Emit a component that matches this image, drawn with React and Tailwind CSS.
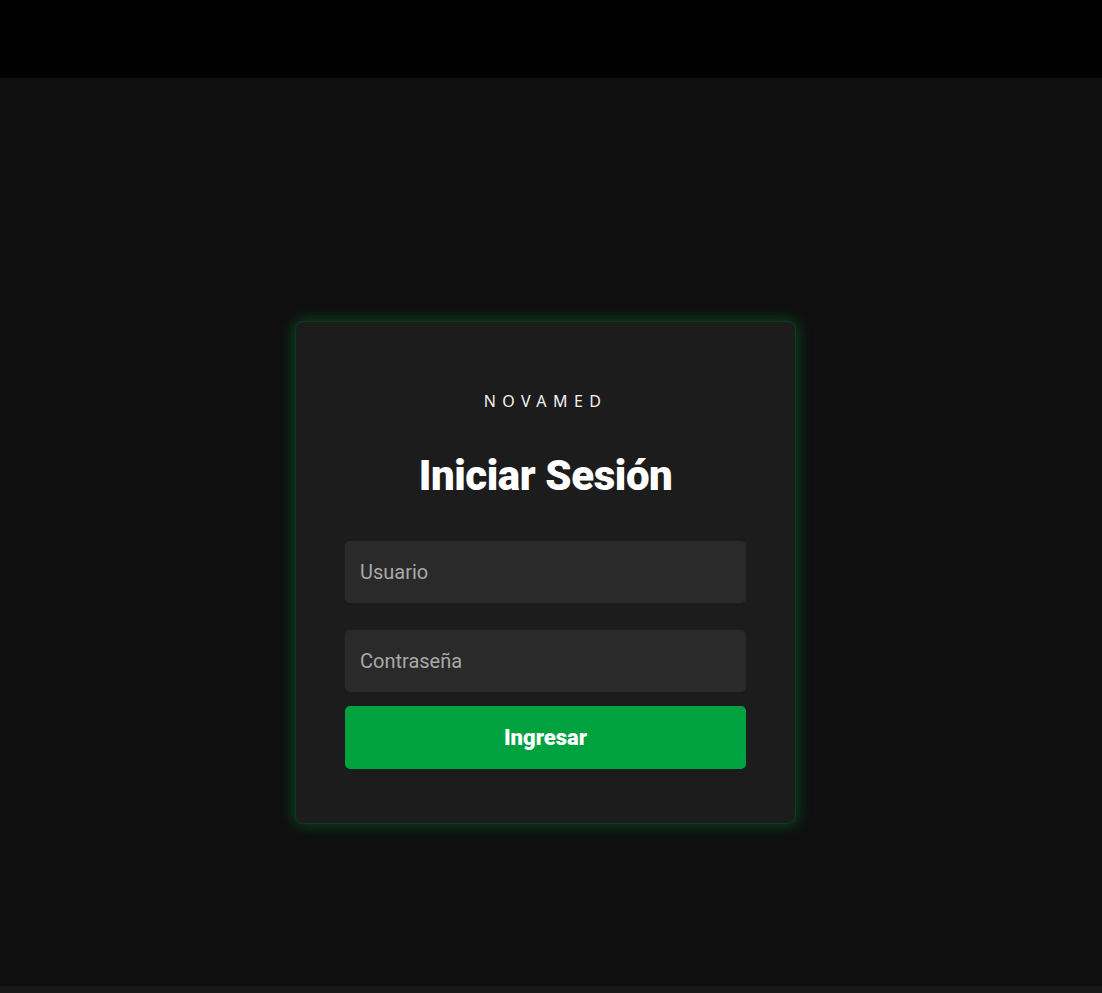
import React from "react";

export default function App() {
  const [user, setUser] = React.useState("");
  const [pass, setPass] = React.useState("");

  return (
    <div className="min-h-screen w-full flex flex-col bg-[#0f0f0f] font-['Roboto','Inter',sans-serif]">
      {/* top bar */}
      <div className="h-[78px] w-full bg-black" />

      <main className="h-[908px] w-full flex justify-center items-start pt-[243px] pr-[11px]">
        <div className="w-[501px] rounded-lg bg-[#1c1c1c] border border-[#0d3a1c] shadow-[0_0_14px_2px_rgba(0,160,60,0.35)] px-[49px] pt-[67px] pb-[54px] flex flex-col items-center">
          <div className="text-[16px] leading-6 tracking-[0.4em] text-[#f2f2f2] font-['Noto_Sans','Open_Sans',sans-serif]">
            NOVAMED
          </div>
          <h1 className="mt-[38px] text-[42px] leading-[50px] font-black text-white tracking-[-0.01em]">
            Iniciar Sesión
          </h1>

          <form className="mt-[40px] w-full flex flex-col" onSubmit={e => e.preventDefault()}>
            <input
              type="text"
              placeholder="Usuario"
              value={user}
              onChange={e => setUser(e.target.value)}
              className="h-[62px] w-full rounded-[5px] bg-[#2a2a2a] px-[15px] text-[20px] text-white placeholder:text-[#a9a9a9] outline-none"
            />
            <input
              type="password"
              placeholder="Contraseña"
              value={pass}
              onChange={e => setPass(e.target.value)}
              className="mt-[27px] h-[62px] w-full rounded-[5px] bg-[#2a2a2a] px-[15px] text-[20px] text-white placeholder:text-[#a9a9a9] outline-none"
            />
            <button
              type="submit"
              className="mt-[14px] h-[63px] w-full rounded-[5px] bg-[#00a13f] text-white text-[22px] font-black"
            >
              Ingresar
            </button>
          </form>
        </div>
      </main>

      <div className="h-[7px] w-full bg-[#181818]" />
    </div>
  );
}
